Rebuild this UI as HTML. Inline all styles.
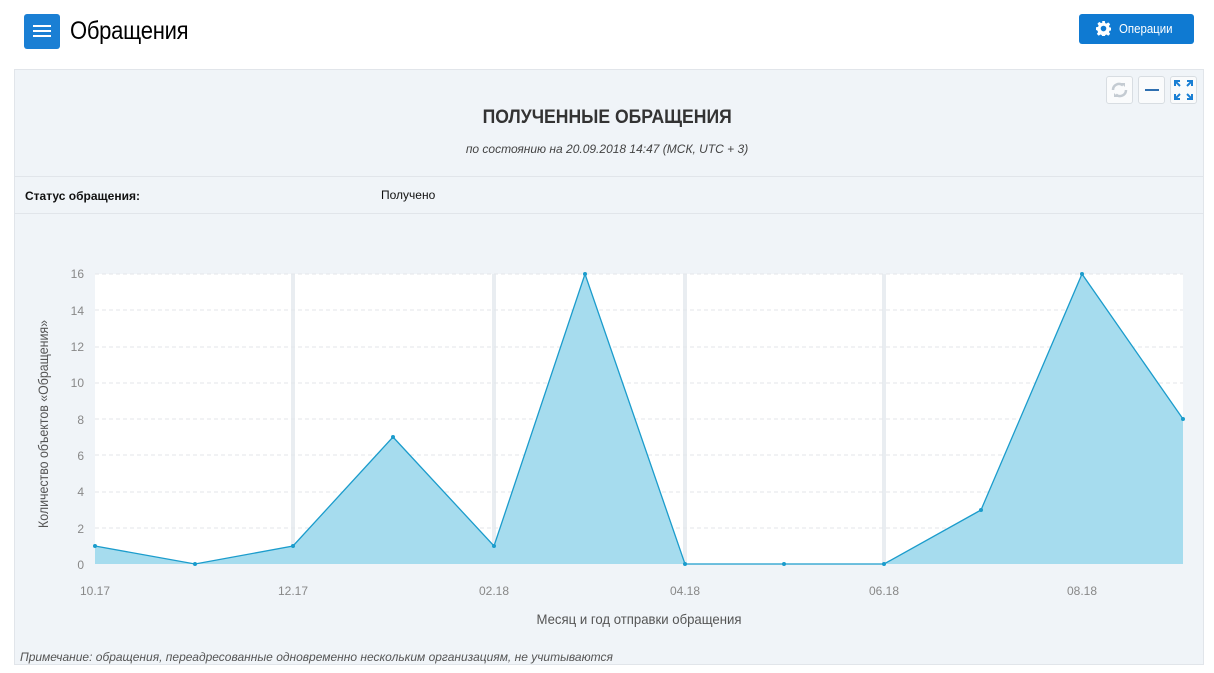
<!DOCTYPE html><html><head><meta charset="utf-8"><style>
body{margin:0;width:1214px;height:673px;background:#fff;font-family:"Liberation Sans",sans-serif;position:relative;overflow:hidden}
.menu{position:absolute;left:24px;top:14px;width:36px;height:35px;background:#1a7fd4;border-radius:3px}
.menu i{position:absolute;left:9px;width:18px;height:2px;background:#fff}
h1{position:absolute;left:70px;top:17px;margin:0;font-weight:normal;font-size:25px;transform:scaleX(0.88);transform-origin:0 0;letter-spacing:-0.3px}
.op{position:absolute;left:1079px;top:14px;width:115px;height:30px;background:#0f7ad2;border-radius:3px;color:#fff;font-size:13px;line-height:30px;box-sizing:border-box;padding-left:40px}
.op span{display:inline-block;transform:scaleX(0.88);transform-origin:0 0}
.panel{position:absolute;left:14px;top:69px;width:1190px;height:596px;background:#f0f4f8;border:1px solid #e1e5ea;box-sizing:border-box}
.btn{position:absolute;top:76px;width:27px;height:28px;background:#fafbfc;border:1px solid #d8dde2;border-radius:3px;box-sizing:border-box}
</style></head><body>
<div class="menu"><i style="top:11px"></i><i style="top:16px"></i><i style="top:21px"></i></div>
<h1>Обращения</h1>
<div class="op"><svg style="position:absolute;left:17px;top:7px" width="15" height="15" viewBox="0 0 16 16"><path fill="#fff" d="M6.6 0h2.8l.4 2.2 1.4.6 1.9-1.3 2 2-1.3 1.9.6 1.4 2.2.4v2.8l-2.2.4-.6 1.4 1.3 1.9-2 2-1.9-1.3-1.4.6-.4 2.2H6.6l-.4-2.2-1.4-.6-1.9 1.3-2-2 1.3-1.9-.6-1.4L0 9.4V6.6l2.2-.4.6-1.4-1.3-1.9 2-2 1.9 1.3 1.4-.6zM8 5a3 3 0 100 6 3 3 0 000-6z"/></svg><span>Операции</span></div>
<div class="panel"></div>
<div class="btn" style="left:1106px"><svg width="25" height="26"><path d="M6 13a6 6 0 0 1 10-4.5M19 13a6 6 0 0 1-10 4.5" stroke="#c4cbd2" stroke-width="2.5" fill="none"/><path d="M14 6l4 0 0 4z M11 20l-4 0 0-4z" fill="#c4cbd2"/></svg></div>
<div class="btn" style="left:1138px"><div style="position:absolute;left:6px;top:12px;width:14px;height:2px;background:#2f6fb0"></div></div>
<div class="btn" style="left:1170px"><svg width="25" height="26" viewBox="0 0 25 26"><g stroke="#1a7fd4" stroke-width="2" fill="none"><path d="M4 9V4h5M4 4l5 5M21 9V4h-5M21 4l-5 5M4 17v5h5M4 22l5-5M21 17v5h-5M21 22l-5-5"/></g></svg></div>
<div style="position:absolute;left:0;width:1214px;top:107px;text-align:center;font-weight:bold;font-size:19px;color:#333;transform:scaleX(0.925);transform-origin:609px 0">ПОЛУЧЕННЫЕ ОБРАЩЕНИЯ</div>
<div style="position:absolute;left:0;width:1214px;top:142px;text-align:center;font-style:italic;font-size:12px;color:#444">по состоянию на 20.09.2018 14:47 (МСК, UTC + 3)</div>
<div style="position:absolute;left:15px;width:1188px;top:176px;height:1px;background:#e1e5ea"></div>
<div style="position:absolute;left:15px;width:1188px;top:213px;height:1px;background:#e1e5ea"></div>
<div style="position:absolute;left:25px;top:189px;font-size:12px;font-weight:bold;color:#111">Статус обращения:</div>
<div style="position:absolute;left:381px;top:188px;font-size:12px;color:#111">Получено</div>
<svg style="position:absolute;left:0;top:0" width="1214" height="673">
<rect x="95" y="274" width="1088" height="290" fill="#fff"/>
<g fill="#e9edf1"><rect x="291" y="274" width="4" height="290"/><rect x="492" y="274" width="4" height="290"/><rect x="683" y="274" width="4" height="290"/><rect x="882" y="274" width="4" height="290"/></g>
<g stroke="#e3e6ea" stroke-dasharray="4 3"><path d="M95 274H1183M95 310H1183M95 347H1183M95 383H1183M95 419H1183M95 455H1183M95 492H1183M95 528H1183"/></g>
<path d="M95 546L195 564L293 546L393 437L494 546L585 274L685 564L784 564L884 564L981 510L1082 274L1183 419L1183 564L95 564Z" fill="#a6dcee"/>
<path d="M95 546L195 564L293 546L393 437L494 546L585 274L685 564L784 564L884 564L981 510L1082 274L1183 419" stroke="#1b9ccc" stroke-width="1.3" fill="none"/>
<g fill="#1b9ccc"><circle cx="95" cy="546" r="2"/><circle cx="195" cy="564" r="2"/><circle cx="293" cy="546" r="2"/><circle cx="393" cy="437" r="2"/><circle cx="494" cy="546" r="2"/><circle cx="585" cy="274" r="2"/><circle cx="685" cy="564" r="2"/><circle cx="784" cy="564" r="2"/><circle cx="884" cy="564" r="2"/><circle cx="981" cy="510" r="2"/><circle cx="1082" cy="274" r="2"/><circle cx="1183" cy="419" r="2"/></g>
<g font-family="Liberation Sans,sans-serif" font-size="12" fill="#888" text-anchor="end"><text x="84" y="278">16</text><text x="84" y="315">14</text><text x="84" y="351">12</text><text x="84" y="387">10</text><text x="84" y="424">8</text><text x="84" y="460">6</text><text x="84" y="496">4</text><text x="84" y="533">2</text><text x="84" y="569">0</text></g>
<g font-family="Liberation Sans,sans-serif" font-size="12" fill="#888" text-anchor="middle"><text x="95" y="595">10.17</text><text x="293" y="595">12.17</text><text x="494" y="595">02.18</text><text x="685" y="595">04.18</text><text x="884" y="595">06.18</text><text x="1082" y="595">08.18</text></g>
<text x="639" y="624" text-anchor="middle" font-family="Liberation Sans,sans-serif" font-size="14" fill="#555" textLength="205" lengthAdjust="spacingAndGlyphs">Месяц и год отправки обращения</text>
<text transform="translate(48 424) rotate(-90)" text-anchor="middle" font-family="Liberation Sans,sans-serif" font-size="14" fill="#555" textLength="208" lengthAdjust="spacingAndGlyphs">Количество объектов «Обращения»</text>
</svg>
<div style="position:absolute;left:20px;top:650px;font-style:italic;font-size:12px;color:#555">Примечание: обращения, переадресованные одновременно нескольким организациям, не учитываются</div>
</body></html>
